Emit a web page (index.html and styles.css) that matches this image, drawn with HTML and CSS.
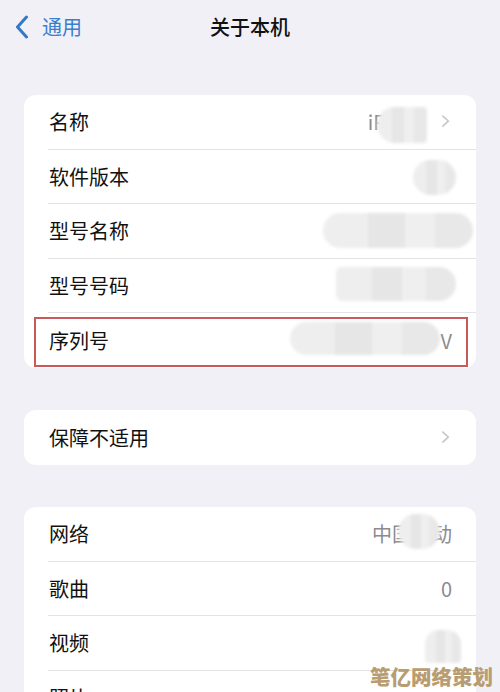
FILE: index.html
```html
<!DOCTYPE html>
<html lang="zh-CN">
<head>
  <meta charset="UTF-8" />
  <title>关于本机</title>
  <link rel="stylesheet" href="styles.css">
</head>
<body>
  <div class="nav">
    <div class="back">
      <svg width="14" height="24" viewBox="0 0 14 24"><path d="M11.5 2 L2.5 12 L11.5 22" fill="none" stroke="#3478c8" stroke-width="3" stroke-linecap="round" stroke-linejoin="round"/></svg>
      <span>通用</span>
    </div>
    <div class="title">关于本机</div>
  </div>

  <div class="group first">
    <div class="row">
      <div class="cell">
        <span class="label">名称</span>
        <span class="value">iP</span>
        <span class="chev">&#x203A;</span>
      </div>
      <span class="blob b-name"></span>
    </div>
    <div class="row">
      <div class="cell">
        <span class="label">软件版本</span>
      </div>
      <span class="blob b-ver"></span>
    </div>
    <div class="row">
      <div class="cell">
        <span class="label">型号名称</span>
      </div>
      <span class="blob b-model"></span>
    </div>
    <div class="row">
      <div class="cell">
        <span class="label">型号号码</span>
        <span class="value dot">.</span>
      </div>
      <span class="blob b-num"></span>
    </div>
    <div class="row last">
      <div class="cell">
        <span class="label">序列号</span>
        <span class="value">V</span>
      </div>
      <span class="blob b-serial"></span>
      <span class="mark"></span>
    </div>
  </div>

  <div class="group">
    <div class="row last">
      <div class="cell">
        <span class="label">保障不适用</span>
        <span class="chev">&#x203A;</span>
      </div>
    </div>
  </div>

  <div class="group">
    <div class="row">
      <div class="cell">
        <span class="label">网络</span>
        <span class="value">中国移动</span>
      </div>
      <span class="blob b-net"></span>
    </div>
    <div class="row">
      <div class="cell">
        <span class="label">歌曲</span>
        <span class="value">0</span>
      </div>
    </div>
    <div class="row">
      <div class="cell">
        <span class="label">视频</span>
      </div>
      <span class="blob b-video"></span>
    </div>
    <div class="row">
      <div class="cell">
        <span class="label">照片</span>
      </div>
    </div>
  </div>

  <div class="watermark">笔亿网络策划</div>
</body>
</html>
```

FILE: styles.css
```css
body {
  margin: 0;
  background-color: #f1f0f6;
  font-family: "Noto Sans CJK SC", "Noto Sans", sans-serif;
  color: #111;
  height: 692px;
  overflow: hidden;
  position: relative;
}
.nav {
  height: 54px;
  position: relative;
  display: flex;
  align-items: center;
  justify-content: center;
}
.back {
  position: absolute;
  left: 15px;
  top: 14px;
  display: flex;
  align-items: center;
  gap: 13px;
  color: #3a7fcf;
  font-size: 20px;
  line-height: 26px;
}
.title {
  font-size: 20px;
  font-weight: 500;
  line-height: 26px;
}
.group {
  background: #fff;
  margin: 42px 24px 0;
  border-radius: 12px;
  overflow: hidden;
}
.group.first { margin-top: 41px; }
.row {
  position: relative;
  padding-left: 24px;
}
.cell {
  height: 53.5px;
  border-bottom: 1px solid #e3e3e7;
  display: flex;
  align-items: center;
  padding-right: 24px;
}
.row.last .cell {
  border-bottom: none;
  height: 55px;
}
.label {
  font-size: 20px;
  padding-left: 1px;
  flex: 1;
}
.value {
  font-size: 20px;
  color: #8b8b90;
}
.value.dot { font-size: 14px; }
.chev {
  font-size: 30px;
  color: #c4c4c8;
  margin-left: 54px;
  line-height: 30px;
  margin-top: -4px;
  font-family: "DejaVu Sans", sans-serif;
  font-weight: 300;
}
.blob {
  position: absolute;
  background: linear-gradient(90deg, #eeeeee 0 30%, #e6e6e6 30% 55%, #efefef 55% 75%, #e8e8e8 75%);
  border-radius: 18px;
  filter: blur(1.5px);
}
.b-name { left: 353px; width: 50px; top: 12px; height: 36px; border-radius: 18px 4px 4px 18px; }
.b-ver { left: 389px; width: 43px; top: 10px; height: 35px; }
.b-model { left: 299px; width: 150px; top: 9px; height: 35px; }
.b-num { left: 312px; width: 120px; top: 8px; height: 34px; border-radius: 6px 18px 18px 6px; }
.b-serial { left: 266px; width: 150px; top: 9px; height: 33px; }
.b-net { left: 374px; width: 42px; top: 7px; height: 35px; }
.b-video { left: 401px; width: 36px; top: 14px; height: 33px; border-radius: 14px 14px 4px 4px; }
.mark {
  position: absolute;
  left: 10px;
  right: 8px;
  top: 4px;
  bottom: 1px;
  border: 2px solid #c95a5a;
}
.watermark {
  position: absolute;
  left: 370px;
  top: 663px;
  font-size: 20.5px;
  font-weight: 900;
  color: #b89d72;
  line-height: 26px;
}
```
